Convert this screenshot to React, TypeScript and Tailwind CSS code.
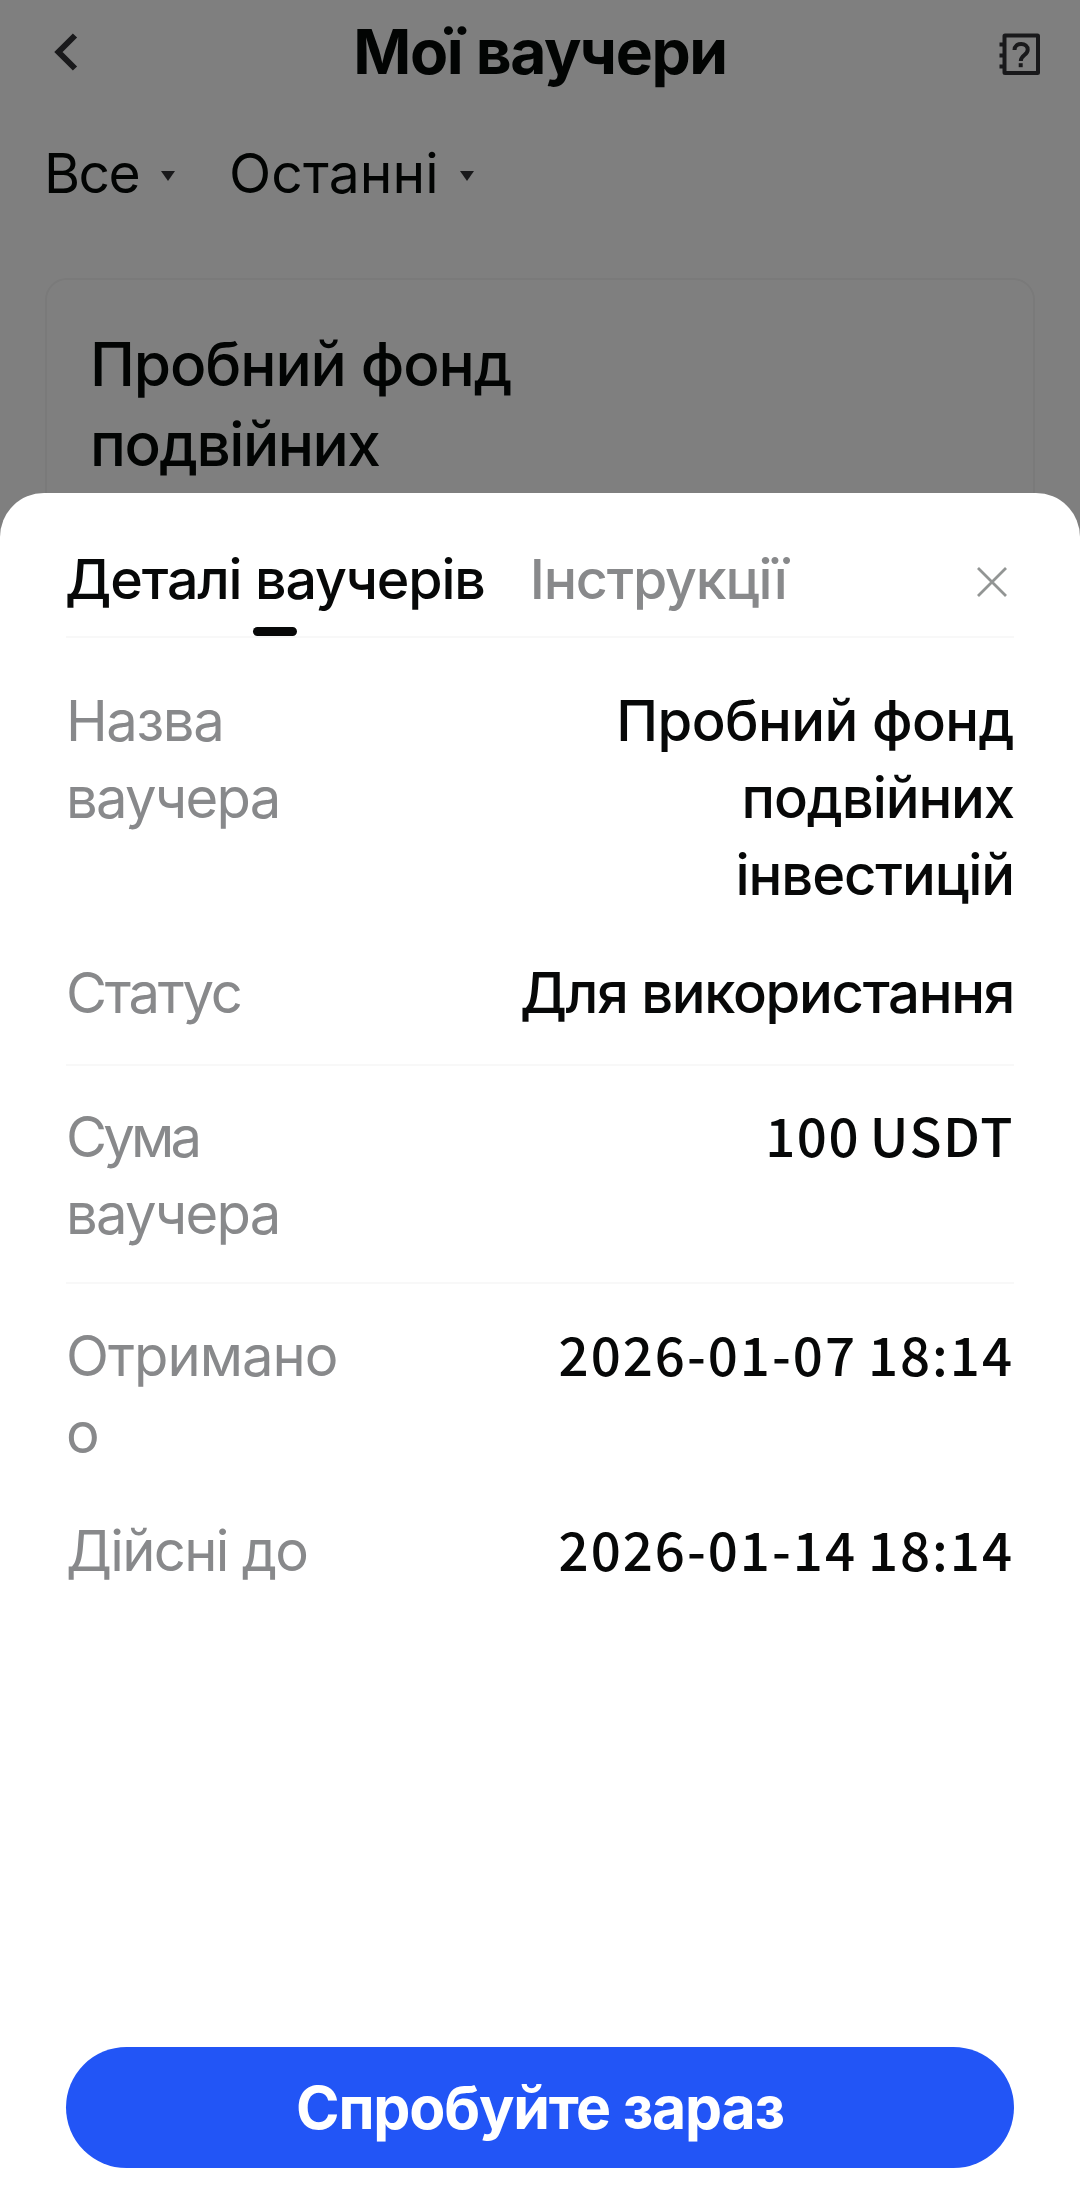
import React, { useState } from 'react';
import clsx from 'clsx';

interface DetailRow {
    label: string;
    value: string;
    labelClass: string;
    valueClass: string;
    numeric?: boolean;
}

const SECTIONS: { id: string; className: string; rows: DetailRow[] }[] = [
    {
        id: 'voucher',
        className: 'pt-[45px] pb-[32px] border-b-2',
        rows: [
            { label: 'Назва ваучера', value: 'Пробний фонд подвійних інвестицій', labelClass: 'tracking-[-1.7px] first-line:tracking-[-1.4px]', valueClass: 'tracking-[-1.1px] first-line:tracking-[-0.6px]' },
            { label: 'Статус', value: 'Для використання', labelClass: 'tracking-[-2.3px]', valueClass: 'tracking-[-1.3px]' },
        ],
    },
    {
        id: 'amount',
        className: 'pt-[33px] pb-[29px] border-b-2',
        rows: [
            { label: 'Сума ваучера', value: '100 USDT', labelClass: 'tracking-[-1.7px] first-line:tracking-[-3.8px]', valueClass: 'tracking-[1.6px] [word-spacing:-4px]', numeric: true },
        ],
    },
    {
        id: 'dates',
        className: 'pt-[34px]',
        rows: [
            { label: 'Отримано о', value: '2026-01-07 18:14', labelClass: 'tracking-[-1px]', valueClass: 'tracking-[2px] [word-spacing:-3px]', numeric: true },
            { label: 'Дійсні до', value: '2026-01-14 18:14', labelClass: 'tracking-[-1.7px]', valueClass: 'tracking-[2px] [word-spacing:-3px]', numeric: true },
        ],
    },
];

const TABS = [
    { id: 'details', title: 'Деталі ваучерів' },
    { id: 'rules', title: 'Інструкції' },
];

const BackIcon = () => (
    <svg width="24" height="38" viewBox="0 0 24 38" fill="none" stroke="#333336" strokeWidth="6">
        <path d="M21 2.5 4.5 19 21 35.5" />
    </svg>
);

const GuideIcon = () => (
    <svg width="42" height="42" viewBox="0 0 42 42" fill="none" stroke="#333336">
        <rect x="5.5" y="2.5" width="33.5" height="37.5" rx="0.5" strokeWidth="4" />
        <path d="M0.5 11.5h5M0.5 22.5h5M0.5 33.5h5" strokeWidth="4" />
        <path d="M15.5 17c0-4 3-6 6.7-6s6.5 2.2 6.5 5.7c0 5.3-6.9 5.3-6.9 11.3" strokeWidth="4" />
        <path d="M19.7 32.2h4" strokeWidth="4" />
    </svg>
);

const Caret = ({ className }: { className?: string }) => (
    <svg width="14" height="10" viewBox="0 0 14 10" className={className}>
        <path d="M0 0h14L7 10z" fill="#333336" />
    </svg>
);

const CloseIcon = () => (
    <svg width="30" height="30" viewBox="0 0 30 30" stroke="#929594" strokeWidth="2.8">
        <path d="M1 1l28 28M29 1L1 29" />
    </svg>
);

const VoucherPage = () => (
    <div className="h-full bg-white">
        <header className="h-[104px] flex items-center justify-between pl-[54px] pr-[39px]">
            <button type="button" className="w-[52px] flex"><BackIcon /></button>
            <h1 className="pr-[25px] text-[62.3px] leading-[76px] font-bold tracking-[-1.35px]">Мої ваучери</h1>
            <button type="button" className="flex pt-[3px]"><GuideIcon /></button>
        </header>

        <div className="h-[137px] flex items-center pt-[2px] px-[44px] text-[55.2px]">
            <span className="tracking-[-1.6px]">Все</span>
            <Caret className="mt-[5px] ml-[22px]" />
            <span className="ml-[54px] tracking-[0.1px]">Останні</span>
            <Caret className="mt-[5px] ml-[21px]" />
        </div>

        <div className="mt-[37px] mx-[45px] h-[320px] rounded-[22px] border-2 border-[#f4f4f4] pt-[45px] pl-[43px]">
            <p className="w-[460px] text-[60.3px] leading-[80px] font-medium tracking-[-1.5px] first-line:tracking-[-1.1px]">Пробний фонд подвійних</p>
        </div>
    </div>
);

const VoucherSheet = () => {
    const [activeTab, setActiveTab] = useState('details');

    return (
        <div className="absolute inset-x-0 bottom-0 h-[1709px] flex flex-col bg-white rounded-t-[44px] px-[66px]">
            <div className="h-[145px] pt-[28px] flex items-stretch border-b-2 border-[#f8f8f8] text-[55.5px] font-medium tracking-[-1.15px]">
                {TABS.map((tab) => (
                    <button
                        key={tab.id}
                        type="button"
                        onClick={() => setActiveTab(tab.id)}
                        className={clsx('relative -ml-px mr-[46px] flex items-center pt-px', activeTab === tab.id ? 'text-[#070808]' : 'text-[#88898b]')}
                    >
                        {tab.title}
                        {activeTab === tab.id && (
                            <span className="absolute bottom-0 left-1/2 -translate-x-1/2 w-[44px] h-[9px] rounded-full bg-[#070808]" />
                        )}
                    </button>
                ))}
                <button type="button" className="ml-auto mr-[7px] flex items-center pt-[6px]"><CloseIcon /></button>
            </div>

            {SECTIONS.map((section) => (
                <div key={section.id} className={clsx('flex flex-col gap-[41px] border-[#f8f8f8] text-[56.2px] leading-[77px]', section.className)}>
                    {section.rows.map((row) => (
                        <div key={row.label} className="flex items-start justify-between">
                            <span className={clsx('w-[285px] text-[#88898b]', row.labelClass)}>{row.label}</span>
                            <span className={clsx('w-[520px] text-right font-medium text-[#070808]', row.valueClass)}>
                                {row.numeric ? (
                                    <span className="font-['Noto_Sans_CJK_SC',sans-serif] text-[52.8px] leading-none">{row.value}</span>
                                ) : row.value}
                            </span>
                        </div>
                    ))}
                </div>
            ))}

            <button
                type="button"
                className="mt-auto mb-[34px] h-[121px] pt-[2px] shrink-0 rounded-full bg-[#2255f6] text-white text-[58.9px] font-bold tracking-[-1.2px]"
            >
                Спробуйте зараз
            </button>
        </div>
    );
};

export default function App() {
    return (
        <div className="relative w-[1080px] h-[2202px] overflow-hidden font-['Inter',sans-serif] text-[#050807]">
            <VoucherPage />
            <div className="absolute inset-0 bg-black/50" />
            <VoucherSheet />
        </div>
    );
}
